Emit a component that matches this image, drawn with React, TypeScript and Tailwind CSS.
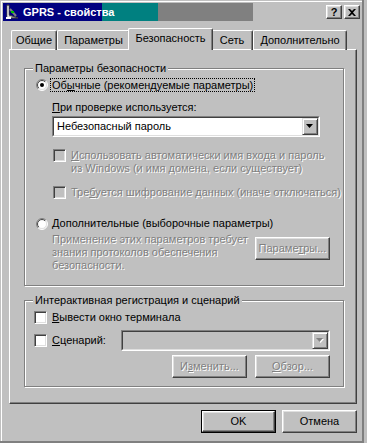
import React from "react";

const DIS = "text-[#808080] [text-shadow:1px_1px_0_#ffffff]";

function U({ children }: { children: React.ReactNode }) {
  return <span className="underline decoration-1 underline-offset-[1px]">{children}</span>;
}

function Radio({ checked, id }: { checked?: boolean; id: string }) {
  return (
    <svg width="12" height="12" viewBox="0 0 12 12" className="shrink-0">
      <defs>
        <clipPath id={id + "tl"}>
          <polygon points="0,0 12,0 0,12" />
        </clipPath>
        <clipPath id={id + "br"}>
          <polygon points="12,0 12,12 0,12" />
        </clipPath>
      </defs>
      <circle cx="6" cy="6" r="5" fill="#ffffff" />
      <g clipPath={`url(#${id}tl)`} fill="none">
        <circle cx="6" cy="6" r="5.5" stroke="#808080" strokeWidth="1" />
        <circle cx="6" cy="6" r="4.5" stroke="#404040" strokeWidth="1" />
      </g>
      <g clipPath={`url(#${id}br)`} fill="none">
        <circle cx="6" cy="6" r="5.5" stroke="#ffffff" strokeWidth="1" />
        <circle cx="6" cy="6" r="4.5" stroke="#dfdfdf" strokeWidth="1" />
      </g>
      {checked && <circle cx="6" cy="6" r="2" fill="#000000" />}
    </svg>
  );
}

function Check({ disabled }: { disabled?: boolean }) {
  return (
    <div
      className={`w-[13px] h-[13px] shrink-0 border border-t-[#808080] border-l-[#808080] border-r-white border-b-white shadow-[inset_1px_1px_0_#404040,inset_-1px_-1px_0_#dfdfdf] ${
        disabled ? "bg-[#c0c0c0]" : "bg-white"
      }`}
    />
  );
}

function Arrow({ disabled }: { disabled?: boolean }) {
  return (
    <svg width="8" height="5" viewBox="0 0 8 5">
      {disabled && <polygon points="1,1 8,1 4.5,5" fill="#ffffff" />}
      <polygon points="0,0 7,0 3.5,4" fill={disabled ? "#808080" : "#000000"} />
    </svg>
  );
}

function Combo({ className, text, disabled }: { className: string; text?: string; disabled?: boolean }) {
  return (
    <div
      className={`${className} h-[21px] border border-t-[#808080] border-l-[#808080] border-r-white border-b-white`}
    >
      <div
        className={`h-full flex border border-t-[#404040] border-l-[#404040] border-r-[#dfdfdf] border-b-[#dfdfdf] ${
          disabled ? "bg-[#c0c0c0]" : "bg-white"
        }`}
      >
        <div className="flex-1 pl-[3px] flex items-center">{text}</div>
        <div className="w-[16px] h-full bg-[#c0c0c0] flex items-center justify-center border border-t-[#dfdfdf] border-l-[#dfdfdf] border-r-[#404040] border-b-[#404040] shadow-[inset_1px_1px_0_#ffffff,inset_-1px_-1px_0_#808080]">
          <Arrow disabled={disabled} />
        </div>
      </div>
    </div>
  );
}

function Btn({ children, disabled }: { children: React.ReactNode; disabled?: boolean }) {
  return (
    <div className="w-[75px] h-[23px] shrink-0 flex items-center justify-center border border-t-white border-l-white border-r-[#404040] border-b-[#404040] shadow-[inset_-1px_-1px_0_#808080,inset_1px_1px_0_#dfdfdf]">
      <span className={disabled ? DIS : ""}>{children}</span>
    </div>
  );
}

function Tab({ className, children }: { className: string; children: React.ReactNode }) {
  return (
    <div
      className={`${className} h-[20px] shrink-0 flex justify-center pt-[3px] border border-b-0 border-t-white border-l-white border-r-[#404040] rounded-tl-[2px] rounded-tr-[2px] shadow-[inset_-1px_0_0_#808080]`}
    >
      {children}
    </div>
  );
}

function TitleIcon() {
  return (
    <svg width="16" height="16" viewBox="0 0 16 16" className="shrink-0">
      <path d="M3 1 L5 1 L5 11 L14 14 L3 14 Z" fill="#c0c0c0" stroke="#404040" strokeWidth="1" />
      <path d="M4 2 L4 13" stroke="#ffffff" strokeWidth="1" />
      <path d="M6 5 L12 12" stroke="#808080" strokeWidth="2" />
      <rect x="7" y="7" width="3" height="2" fill="#00c000" />
      <rect x="2" y="13" width="5" height="2" fill="#ffffff" />
    </svg>
  );
}

function CapBtn({ children }: { children: React.ReactNode }) {
  return (
    <div className="w-[16px] h-[14px] bg-[#c0c0c0] flex items-center justify-center border border-t-white border-l-white border-r-[#404040] border-b-[#404040] shadow-[inset_-1px_-1px_0_#808080,inset_1px_1px_0_#dfdfdf]">
      {children}
    </div>
  );
}

export default function App() {
  return (
    <div className="w-[367px] h-[443px] bg-[#c0c0c0] overflow-hidden font-['Liberation_Sans',Arial,sans-serif] text-[11px] leading-[13px] text-black select-none">
      <div className="w-[364px] h-[443px] border-r-2 border-b-2 border-[#808080] pl-[1px] pt-[1px]">
        <div className="h-full border-l border-t border-white pl-[1px] pt-[1px]">
          {/* Title bar */}
          <div className="h-[18px] flex items-center bg-[linear-gradient(to_right,#000080_99px,#008080_99px,#008080_155px,#808080_155px,#808080_250px,#c0c0c0_250px)]">
            <div className="ml-[1px]">
              <TitleIcon />
            </div>
            <span className="ml-[3px] text-white font-bold text-[11px] leading-[13px]">GPRS - свойства</span>
            <div className="ml-auto mr-[2px] flex gap-[2px]">
              <CapBtn>
                <span className="font-bold text-[11px] leading-[11px]">?</span>
              </CapBtn>
              <CapBtn>
                <svg width="8" height="7" viewBox="0 0 8 7">
                  <path d="M0 0 L2 0 L4 2 L6 0 L8 0 L5 3.5 L8 7 L6 7 L4 5 L2 7 L0 7 L3 3.5 Z" fill="#000" />
                </svg>
              </CapBtn>
            </div>
          </div>

          <div className="ml-[6px] w-[348px] mt-[7px]">
            {/* Tabs */}
            <div className="flex items-end h-[22px] pl-[2px]">
              <Tab className="w-[46px]">Общие</Tab>
              <Tab className="w-[73px]">Параметры</Tab>
              <div className="relative z-10 w-[85px] -mx-[2px] h-[22px] shrink-0 flex justify-center pt-[3px] bg-[#c0c0c0] border border-b-0 border-t-white border-l-white border-r-[#404040] rounded-tl-[2px] rounded-tr-[2px] shadow-[inset_-1px_0_0_#808080]">
                Безопасность
              </div>
              <Tab className="w-[42px]">Сеть</Tab>
              <Tab className="w-[94px]">Дополнительно</Tab>
            </div>

            {/* Panel */}
            <div className="-mt-[1px] h-[355px] border border-t-white border-l-white border-r-[#404040] border-b-[#404040] shadow-[inset_-1px_-1px_0_#808080] pl-[14px] pt-[18px]">
              {/* Group 1 */}
              <div className="relative w-[320px] h-[218px] border border-[#808080] shadow-[inset_1px_1px_0_#ffffff,1px_1px_0_#ffffff]">
                <span className="absolute -top-[7px] left-[8px] px-[2px] bg-[#c0c0c0]">Параметры безопасности</span>

                <div className="mt-[9px] ml-[11px] flex items-center h-[14px]">
                  <Radio checked id="r1" />
                  <span className="ml-[2px] h-[14px] border border-dotted border-black px-[1px] leading-[12px]">
                    Об<U>ы</U>чные (рекомендуемые параметры)
                  </span>
                </div>

                <div className="mt-[9px] ml-[27px]">
                  <U>П</U>ри проверке используется:
                </div>

                <Combo className="mt-[2px] ml-[27px] w-[268px]" text="Небезопасный пароль" />

                <div className="mt-[12px] ml-[28px] flex gap-[5px]">
                  <Check disabled />
                  <div className={DIS}>
                    <U>И</U>спользовать автоматически имя входа и пароль
                    <br />
                    из Windows (и имя домена, если существует)
                  </div>
                </div>

                <div className="mt-[11px] ml-[28px] flex gap-[5px]">
                  <Check disabled />
                  <div className={DIS}>
                    Тре<U>б</U>уется шифрование данных (иначе отключаться)
                  </div>
                </div>

                <div className="mt-[18px] ml-[11px] flex items-center h-[13px]">
                  <Radio id="r2" />
                  <span className="ml-[4px]">
                    <U>Д</U>ополнительные (выборочные параметры)
                  </span>
                </div>

                <div className="mt-[3px] flex">
                  <div className={`ml-[27px] ${DIS}`}>
                    Применение этих параметров требует
                    <br />
                    знания протоколов обеспечения
                    <br />
                    безопасности.
                  </div>
                  <div className="ml-auto mr-[13px] mt-[4px]">
                    <Btn disabled>
                      Параме<U>т</U>ры...
                    </Btn>
                  </div>
                </div>
              </div>

              {/* Group 2 */}
              <div className="relative mt-[14px] w-[320px] h-[87px] border border-[#808080] shadow-[inset_1px_1px_0_#ffffff,1px_1px_0_#ffffff]">
                <span className="absolute -top-[7px] left-[8px] px-[2px] bg-[#c0c0c0]">
                  Интерактивная регистрация и сценарий
                </span>

                <div className="mt-[10px] ml-[9px] flex items-center h-[13px] gap-[5px]">
                  <Check />
                  <span>
                    <U>В</U>ывести окно терминала
                  </span>
                </div>

                <div className="mt-[6px] ml-[9px] mr-[13px] flex items-center h-[21px]">
                  <Check />
                  <span className="ml-[5px]">
                    <U>С</U>ценарий:
                  </span>
                  <Combo className="ml-auto w-[209px]" disabled />
                </div>

                <div className="mt-[4px] mr-[13px] flex justify-end gap-[8px]">
                  <Btn disabled>
                    И<U>з</U>менить...
                  </Btn>
                  <Btn disabled>
                    <U>О</U>бзор...
                  </Btn>
                </div>
              </div>
            </div>

            {/* Bottom buttons */}
            <div className="mt-[6px] flex justify-end gap-[6px]">
              <div className="w-[75px] h-[23px] border border-black">
                <div className="w-full h-full flex items-center justify-center border border-t-white border-l-white border-r-[#404040] border-b-[#404040] shadow-[inset_-1px_-1px_0_#808080,inset_1px_1px_0_#dfdfdf]">
                  OK
                </div>
              </div>
              <Btn>Отмена</Btn>
            </div>
          </div>
        </div>
      </div>
    </div>
  );
}
